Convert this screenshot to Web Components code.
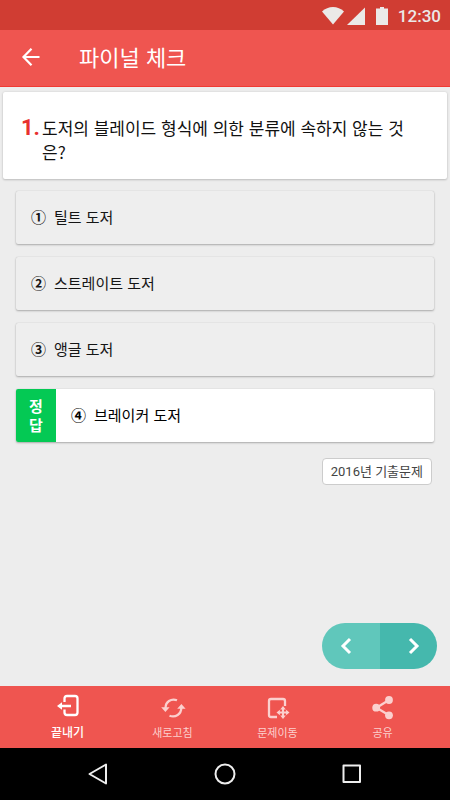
<!DOCTYPE html>
<html lang="ko">
<head>
<meta charset="utf-8">
<meta name="viewport" content="width=device-width, initial-scale=1">
<title>파이널 체크</title>
<style>
  body { margin: 0; font-family: "Noto Sans CJK KR", sans-serif; background: #ededed; }
</style>
</head>
<body>
<quiz-app></quiz-app>
<script>
const define = (name, html) => {
  const template = document.createElement('template');
  template.innerHTML = html;
  customElements.define(name, class extends HTMLElement {
    constructor() {
      super();
      this.attachShadow({ mode: 'open' }).append(template.content.cloneNode(true));
    }
  });
};

define('status-bar', `
<style>
  :host { display: flex; align-items: center; justify-content: flex-end; height: 30px; padding: 2px 9px 0; background: #d03d33; color: #ebe9e8; font: 500 17px/20px Roboto, sans-serif; box-sizing: border-box; }
  svg { display: block; fill: currentColor; }
  .signal { margin-left: 2px; }
  .battery { margin: 0 10px 0 11px; }
</style>
<svg width="24" height="18" viewBox="0 0 24 18" role="img" aria-label="Wi-Fi"><path d="M12 17.5 1 4.500C4 1.500 8 0 12 0s8 1.500 11 4.500z"/></svg>
<svg class="signal" width="18" height="18" viewBox="0 0 18 18" role="img" aria-label="Signal"><path d="M0 18 18 .5V18z"/></svg>
<svg class="battery" width="12" height="18" viewBox="0 0 12 18" role="img" aria-label="Battery"><path d="M4 0h4v1.500h4V18H0V1.500h4z"/></svg>
<time>12:30</time>`);

define('app-header', `
<style>
  :host { display: flex; align-items: center; height: 57px; box-sizing: border-box; padding-left: 16px; gap: 33px; background: #ef5550; border-bottom: 1px solid #f03a33; color: #fff; }
  button { display: grid; place-items: center; width: 30px; height: 40px; padding: 0 0 2px; border: 0; background: none; color: inherit; }
  h1 { margin: 0; font-size: 22px; line-height: 32px; font-weight: 400; padding-bottom: 4px; }
  svg { display: block; fill: none; stroke: currentColor; stroke-width: 2.2; }
</style>
<button aria-label="뒤로"><svg width="20" height="20" viewBox="0 0 20 20"><path d="M18.500 10H2.500M10.500 1.800 2.500 10l8 8.200"/></svg></button>
<h1><slot></slot></h1>`);

define('question-card', `
<style>
  :host { display: flex; gap: 2px; margin: 5px 3px 0; min-height: 87px; box-sizing: border-box; padding: 24px 30px 14px 18px; border-radius: 2px; background: #fff; box-shadow: 0 0 2px #ccc, 0 1px 2px #bbb; color: #111; }
  .num { color: #e8302e; font: 700 22px/24px Roboto, sans-serif; }
  h2 { margin: 0; font-size: 17px; line-height: 24px; font-weight: 400; }
</style>
<span class="num"><slot name="number"></slot></span>
<h2><slot></slot></h2>`);

define('answer-option', `
<style>
  :host { display: block; }
  button { display: flex; align-items: stretch; width: 100%; min-height: 53px; padding: 0; border: 0; border-radius: 2px; overflow: hidden; background: #eee; box-shadow: 0 0 1px #bbb, 0 1px 2px #aaa; color: #151515; font: 400 15px/22px "Noto Sans CJK KR", sans-serif; text-align: left; }
  .body { display: flex; align-items: center; gap: 8px; padding: 0 15px 2px; }
  .n { font-weight: 700; }
  .mark { display: none; width: 40px; place-content: center; text-align: center; background: #04c954; color: #fff; font-weight: 700; line-height: 19px; padding-bottom: 2px; }
  :host([correct]) button { background: #fff; color: #000; }
  :host([correct]) .mark { display: grid; }
</style>
<button><span class="mark"><span>정<br>답</span></span><span class="body"><span class="n"><slot name="number"></slot></span><span><slot></slot></span></span></button>`);

define('source-chip', `
<style>
  :host { display: block; box-sizing: border-box; padding: 0 8px; border: 1px solid #ccc; border-radius: 4px; background: #fff; color: #444; font: 400 13px/25px Roboto, "Noto Sans CJK KR", sans-serif; }
</style>
<slot></slot>`);

define('page-switch', `
<style>
  :host { display: flex; width: 115px; height: 46px; border-radius: 23px; overflow: hidden; }
  button { flex: 1; display: grid; align-items: center; padding: 0; border: 0; color: #fff; }
  .prev { background: #60c7bb; justify-content: start; padding-left: 18px; }
  .next { background: #45b8ad; justify-content: end; padding-right: 17px; }
  svg { display: block; fill: none; stroke: currentColor; stroke-width: 3; }
</style>
<button class="prev" aria-label="이전 문제"><svg width="12" height="18" viewBox="0 0 12 18"><path d="M10 2 3 9l7 7"/></svg></button>
<button class="next" aria-label="다음 문제"><svg width="12" height="18" viewBox="0 0 12 18"><path d="m2 2 7 7-7 7"/></svg></button>`);

define('tool-bar', `
<style>
  :host { display: grid; grid-template-columns: repeat(4, 1fr); height: 62px; box-sizing: border-box; padding: 0 15px; background: #ef5550; }
</style>
<slot></slot>`);

define('tool-item', `
<style>
  :host { display: grid; color: #fbd0ce; }
  :host([active]) { color: #fff; }
  button { display: flex; flex-direction: column; align-items: center; gap: 4px; padding: 8px 0 0; border: 0; background: none; color: inherit; font: 400 11px/16px "Noto Sans CJK KR", sans-serif; }
  :host([active]) button { font-weight: 500; font-size: 12px; }
  .icon { display: block; height: 26px; }
</style>
<button><span class="icon"><slot name="icon"></slot></span><span><slot></slot></span></button>`);

define('system-nav', `
<style>
  :host { display: flex; justify-content: center; align-items: center; gap: 99px; height: 52px; background: #000; color: #eee; }
  button { display: grid; place-items: center; width: 28px; height: 28px; padding: 0; border: 0; background: none; color: inherit; }
  svg { display: block; fill: none; stroke: currentColor; stroke-width: 2; stroke-linejoin: round; }
</style>
<button aria-label="뒤로"><svg width="22" height="22" viewBox="0 0 22 22"><path d="M19 1.500v19L2.500 11z"/></svg></button>
<button aria-label="홈"><svg width="22" height="22" viewBox="0 0 22 22"><circle cx="11" cy="11" r="9.500"/></svg></button>
<button aria-label="최근 앱"><svg width="22" height="22" viewBox="0 0 22 22"><path d="M2.500 2.500h16.500v16.500H2.500z"/></svg></button>`);

define('quiz-app', `
<style>
  :host { display: flex; flex-direction: column; min-height: 100vh; background: #ededed; }
  main { flex: 1; display: flex; flex-direction: column; }
  .options { display: grid; gap: 13px; padding: 12px 16px 0; }
  .source { align-self: flex-end; margin: 16px 18px 0 0; }
  page-switch { align-self: flex-end; margin: auto 13px 17px 0; }
  tool-item svg { display: block; fill: none; stroke: currentColor; stroke-width: 2; }
</style>
<status-bar></status-bar>
<app-header>파이널 체크</app-header>
<main>
  <question-card><span slot="number">1.</span>도저의 블레이드 형식에 의한 분류에 속하지 않는 것은?</question-card>
  <div class="options">
    <answer-option><span slot="number">①</span>틸트 도저</answer-option>
    <answer-option><span slot="number">②</span>스트레이트 도저</answer-option>
    <answer-option><span slot="number">③</span>앵글 도저</answer-option>
    <answer-option correct><span slot="number">④</span>브레이커 도저</answer-option>
  </div>
  <source-chip class="source">2016년 기출문제</source-chip>
  <page-switch></page-switch>
</main>
<tool-bar>
  <tool-item active><svg slot="icon" width="24" height="24" viewBox="0 0 24 24"><path stroke-width="2.3" d="M8.500 8V4.500Q8.500 2 11 2h8q2.500 0 2.500 2.500v14q0 2.500-2.500 2.500h-8q-2.500 0-2.500-2.500V15.500M15 12H4"/><path fill="currentColor" stroke="none" d="M1 12l5-3.800v7.600z"/></svg>끝내기</tool-item>
  <tool-item><svg slot="icon" width="26" height="26" viewBox="0 0 26 26"><path stroke-width="2.300" d="M17 6.300C11 4 5.500 8 5.500 14M9.500 21.700C15.500 24 21.300 20 21.300 14"/><path fill="currentColor" stroke="none" d="M1.200 13.200h8.400L5.400 18zM17.200 14.800h8.400L21.400 10z"/></svg>새로고침</tool-item>
  <tool-item><svg slot="icon" width="26" height="26" viewBox="0 0 26 26"><path stroke-width="2.300" d="M12 23H6q-2 0-2-2V7q0-2 2-2h12q2 0 2 2v5"/><path d="M13 18.500h10M18 13.500v10"/><path fill="currentColor" stroke="none" d="M18 12l2.800 3.400h-5.600zM18 25l2.800-3.400h-5.600zM11.500 18.500l3.400-2.800v5.600zM24.500 18.500l-3.400-2.800v5.600z"/></svg>문제이동</tool-item>
  <tool-item><svg slot="icon" width="24" height="26" viewBox="0 0 24 26"><path stroke-width="2.300" d="M18 6 5.500 13.700 18 21.300"/><g fill="currentColor" stroke="none"><circle cx="18" cy="6" r="3.900"/><circle cx="5.200" cy="13.700" r="3.900"/><circle cx="18" cy="21.300" r="3.900"/></g></svg>공유</tool-item>
</tool-bar>
<system-nav></system-nav>`);
</script>
</body>
</html>
